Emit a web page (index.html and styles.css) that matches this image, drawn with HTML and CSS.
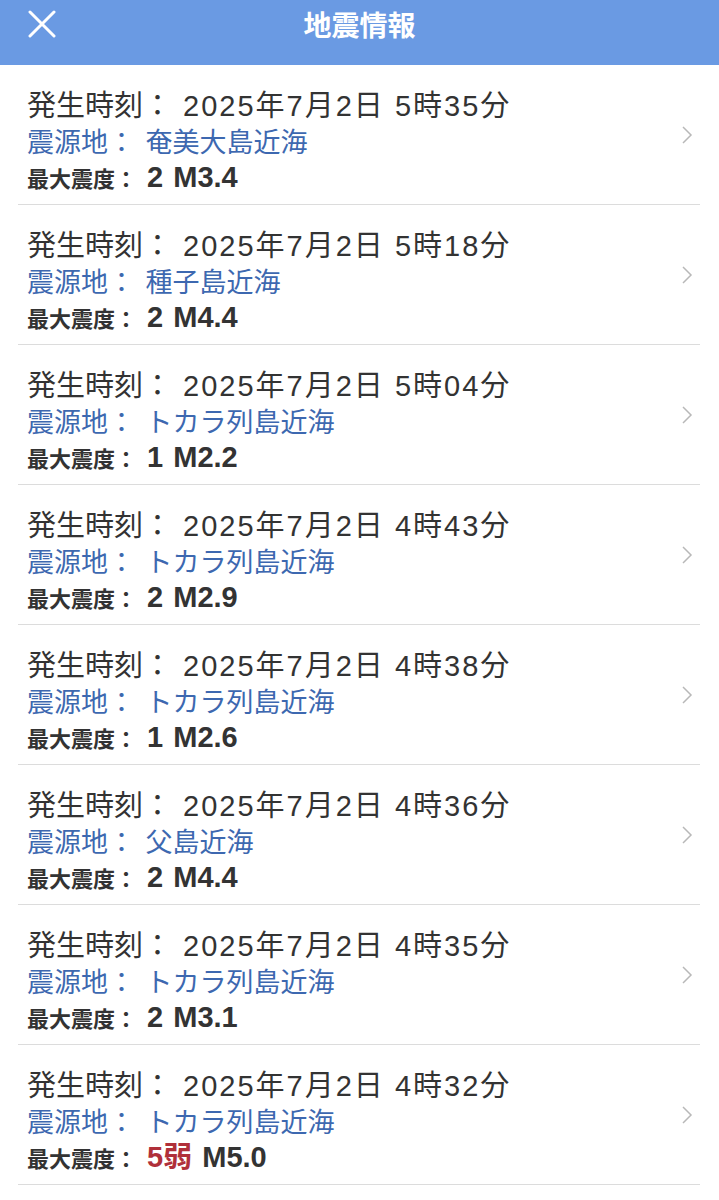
FILE: index.html
```html
<!DOCTYPE html>
<html lang="ja">

<head>

 <meta charset="UTF-8">
 <meta name="viewport" content="width=device-width">

 <title>地震情報</title>

 <!-- Estilos CSS -->
 <link rel="stylesheet" href="styles.css">

</head>

<body>

 <header class="barra">
  <button class="cerrar" type="button" aria-label="閉じる">
   <svg width="28" height="28" viewBox="0 0 28 28">
    <path d="M2 2 L26 26 M26 2 L2 26" stroke="#fff" stroke-width="3" stroke-linecap="round" fill="none"/>
   </svg>
  </button>
  <h1>地震情報</h1>
 </header>

 <ul class="lista">

  <li class="fila">
   <div class="datos">
    <p class="hora">発生時刻： <span class="fecha">2025年7月2日 5時35分</span></p>
    <p class="lugar">震源地： 奄美大島近海</p>
    <p class="escala"><span class="etiqueta">最大震度：</span> 2 M3.4</p>
   </div>
   <svg class="flecha" width="12" height="18" viewBox="0 0 12 18"><path d="M2 1 L10 9 L2 17" stroke="#b8b8b8" stroke-width="1.5" fill="none"/></svg>
  </li>

  <li class="fila">
   <div class="datos">
    <p class="hora">発生時刻： <span class="fecha">2025年7月2日 5時18分</span></p>
    <p class="lugar">震源地： 種子島近海</p>
    <p class="escala"><span class="etiqueta">最大震度：</span> 2 M4.4</p>
   </div>
   <svg class="flecha" width="12" height="18" viewBox="0 0 12 18"><path d="M2 1 L10 9 L2 17" stroke="#b8b8b8" stroke-width="1.5" fill="none"/></svg>
  </li>

  <li class="fila">
   <div class="datos">
    <p class="hora">発生時刻： <span class="fecha">2025年7月2日 5時04分</span></p>
    <p class="lugar">震源地： トカラ列島近海</p>
    <p class="escala"><span class="etiqueta">最大震度：</span> 1 M2.2</p>
   </div>
   <svg class="flecha" width="12" height="18" viewBox="0 0 12 18"><path d="M2 1 L10 9 L2 17" stroke="#b8b8b8" stroke-width="1.5" fill="none"/></svg>
  </li>

  <li class="fila">
   <div class="datos">
    <p class="hora">発生時刻： <span class="fecha">2025年7月2日 4時43分</span></p>
    <p class="lugar">震源地： トカラ列島近海</p>
    <p class="escala"><span class="etiqueta">最大震度：</span> 2 M2.9</p>
   </div>
   <svg class="flecha" width="12" height="18" viewBox="0 0 12 18"><path d="M2 1 L10 9 L2 17" stroke="#b8b8b8" stroke-width="1.5" fill="none"/></svg>
  </li>

  <li class="fila">
   <div class="datos">
    <p class="hora">発生時刻： <span class="fecha">2025年7月2日 4時38分</span></p>
    <p class="lugar">震源地： トカラ列島近海</p>
    <p class="escala"><span class="etiqueta">最大震度：</span> 1 M2.6</p>
   </div>
   <svg class="flecha" width="12" height="18" viewBox="0 0 12 18"><path d="M2 1 L10 9 L2 17" stroke="#b8b8b8" stroke-width="1.5" fill="none"/></svg>
  </li>

  <li class="fila">
   <div class="datos">
    <p class="hora">発生時刻： <span class="fecha">2025年7月2日 4時36分</span></p>
    <p class="lugar">震源地： 父島近海</p>
    <p class="escala"><span class="etiqueta">最大震度：</span> 2 M4.4</p>
   </div>
   <svg class="flecha" width="12" height="18" viewBox="0 0 12 18"><path d="M2 1 L10 9 L2 17" stroke="#b8b8b8" stroke-width="1.5" fill="none"/></svg>
  </li>

  <li class="fila">
   <div class="datos">
    <p class="hora">発生時刻： <span class="fecha">2025年7月2日 4時35分</span></p>
    <p class="lugar">震源地： トカラ列島近海</p>
    <p class="escala"><span class="etiqueta">最大震度：</span> 2 M3.1</p>
   </div>
   <svg class="flecha" width="12" height="18" viewBox="0 0 12 18"><path d="M2 1 L10 9 L2 17" stroke="#b8b8b8" stroke-width="1.5" fill="none"/></svg>
  </li>

  <li class="fila">
   <div class="datos">
    <p class="hora">発生時刻： <span class="fecha">2025年7月2日 4時32分</span></p>
    <p class="lugar">震源地： トカラ列島近海</p>
    <p class="escala"><span class="etiqueta">最大震度：</span> <span class="fuerte">5弱</span> M5.0</p>
   </div>
   <svg class="flecha" width="12" height="18" viewBox="0 0 12 18"><path d="M2 1 L10 9 L2 17" stroke="#b8b8b8" stroke-width="1.5" fill="none"/></svg>
  </li>

 </ul>

</body>

</html>
```

FILE: styles.css
```css
/* Configuración básica */
* {
    margin: 0;
    padding: 0;
    box-sizing: border-box;
}

body {
    background-color: #ffffff;
    color: #333333;
    font-family: 'Liberation Sans', 'Noto Sans CJK JP', sans-serif;
}

/* Barra superior */
.barra {
    height: 65px;
    background-color: #6a9ae3;
    display: flex;
    align-items: flex-start;
    justify-content: center;
    position: relative;
}

.barra h1 {
    color: #ffffff;
    font-family: 'Noto Sans CJK JP', sans-serif;
    font-size: 28px;
    font-weight: bold;
    line-height: 48px;
}

.cerrar {
    position: absolute;
    left: 28px;
    top: 10px;
    background: none;
    border: none;
    width: 28px;
    height: 28px;
}

/* Lista de sismos */
.lista {
    list-style: none;
}

.fila {
    height: 140px;
    margin: 0 19px 0 18px;
    padding: 22px 7px 0 9px;
    border-bottom: 1px solid #dcdcdc;
    display: flex;
    align-items: center;
}

.datos {
    flex: 1;
    align-self: flex-start;
}

.hora {
    font-size: 29px;
    line-height: 38px;
    color: #333333;
    word-spacing: 3px;
}

.fecha {
    letter-spacing: 2px;
    word-spacing: 0;
}

.lugar {
    font-size: 27px;
    line-height: 36px;
    color: #3d68b0;
    word-spacing: 3px;
}

.escala {
    font-size: 29px;
    line-height: 32px;
    font-weight: bold;
    color: #333333;
    word-spacing: 2px;
}

.etiqueta {
    font-size: 22px;
}

.fuerte {
    color: #b0303a;
}

.flecha {
    margin-top: -22px;
}
```
